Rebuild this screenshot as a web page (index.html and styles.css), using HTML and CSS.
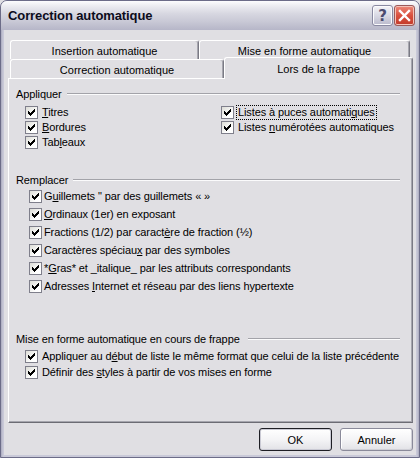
FILE: index.html
```html
<!DOCTYPE html>
<html lang="fr">
<head>
<meta charset="utf-8">
<title>Correction automatique</title>
<link rel="stylesheet" href="styles.css">
</head>
<body>
<div class="window">
  <div class="titlebar">
    <span class="title">Correction automatique</span>
    <div class="tb-buttons">
      <span class="tb-btn help">?</span>
      <span class="tb-btn close"><svg width="21" height="21" viewBox="0 0 21 21"><path d="M6 6L15 15M15 6L6 15" stroke="#fff" stroke-width="2.4" stroke-linecap="square" fill="none"/></svg></span>
    </div>
  </div>
  <div class="client">
    <div class="tabs">
      <div class="tabrow row1">
        <div class="tab t-ins">Insertion automatique</div>
        <div class="tab t-mise">Mise en forme automatique</div>
      </div>
      <div class="tabrow row2">
        <div class="tab t-corr">Correction automatique</div>
        <div class="tab t-lors selected">Lors de la frappe</div>
      </div>
    </div>
    <div class="panel">
      <section class="group g-apply">
        <div class="group-head"><span>Appliquer</span><i class="rule"></i></div>
        <div class="cols">
          <div class="col">
            <div class="row"><span class="cb"></span><span><u>T</u>itres</span></div>
            <div class="row"><span class="cb"></span><span><u>B</u>ordures</span></div>
            <div class="row"><span class="cb"></span><span>Tab<u>l</u>eaux</span></div>
          </div>
          <div class="col">
            <div class="row"><span class="cb"></span><span class="focus">Listes à puces automati<u>q</u>ues</span></div>
            <div class="row"><span class="cb"></span><span>Listes <u>n</u>umérotées automatiques</span></div>
          </div>
        </div>
      </section>
      <section class="group g-replace">
        <div class="group-head"><span>Remplacer</span><i class="rule"></i></div>
        <div class="col">
          <div class="row"><span class="cb"></span><span>G<u>u</u>illemets " par des guillemets « »</span></div>
          <div class="row"><span class="cb"></span><span><u>O</u>rdinaux (1er) en exposant</span></div>
          <div class="row"><span class="cb"></span><span>Fractions (1/2) par caract<u>è</u>re de fraction (½)</span></div>
          <div class="row"><span class="cb"></span><span>Caractères spéciau<u>x</u> par des symboles</span></div>
          <div class="row"><span class="cb"></span><span>*<u>G</u>ras* et _italique_ par les attributs correspondants</span></div>
          <div class="row"><span class="cb"></span><span>Adresses <u>I</u>nternet et réseau par des liens hypertexte</span></div>
        </div>
      </section>
      <section class="group g-format">
        <div class="group-head"><span>Mise en forme automatique en cours de frappe</span><i class="rule wide"></i></div>
        <div class="col">
          <div class="row"><span class="cb"></span><span>Appliquer au d<u>é</u>but de liste le même format que celui de la liste précédente</span></div>
          <div class="row"><span class="cb"></span><span>Définir des <u>s</u>tyles à partir de vos mises en forme</span></div>
        </div>
      </section>
    </div>
    <div class="actions">
      <button class="btn default">OK</button>
      <button class="btn">Annuler</button>
    </div>
  </div>
</div>
</body>
</html>
```
FILE: styles.css
```css
html, body {
  margin: 0;
  padding: 0;
  background: #e0dfe3;
}
body {
  font: 11px "Liberation Sans", Arial, sans-serif;
  color: #000;
}
.window {
  box-sizing: border-box;
  width: 420px;
  height: 458px;
  display: flex;
  flex-direction: column;
  background: linear-gradient(90deg, #a9a9bd, #c9c9d8 2px, #c9c9d8 calc(100% - 2px), #a9a9bd);
  border: 1px solid #6c6c88;
  border-radius: 7px 7px 0 0;
  overflow: hidden;
}
.titlebar {
  flex: none;
  height: 29px;
  display: flex;
  align-items: center;
  justify-content: space-between;
  padding: 0 4px 0 7px;
  background: linear-gradient(#fdfdfe, #ebebf0 18%, #d6d6e0 45%, #c9c9d6 70%, #b6b6c8);
}
.title {
  font: bold 13px "Liberation Sans", Arial, sans-serif;
  color: #0c0c1c;
  letter-spacing: -0.1px;
}
.tb-buttons {
  display: flex;
  gap: 1px;
}
.tb-btn {
  box-sizing: border-box;
  width: 21px;
  height: 21px;
  border-radius: 3px;
  display: flex;
  align-items: center;
  justify-content: center;
}
.help {
  border: 1px solid #8a8aa2;
  box-shadow: inset 0 0 0 1px #fbfbfd;
  background: linear-gradient(#f4f4f8, #d6d6e2 55%, #babacc);
  font: bold 15px "DejaVu Sans", sans-serif;
  color: #4c4c70;
}
.close {
  border: 1px solid #9a5a5a;
  box-shadow: inset 0 0 0 1px #f3c2b8;
  background: linear-gradient(#ec8a7a, #d9503f 50%, #c23a2a);
}
.close svg {
  display: block;
  margin: -1px;
}
.client {
  flex: 1;
  margin: 0 3px 2px;
  background: #e0dfe3;
  padding-top: 10px;
  display: flex;
  flex-direction: column;
}
.tabs {
  margin-left: 6px;
}
.tabrow {
  display: flex;
  height: 19px;
}
.row2 {
  margin-top: -2px;
  height: 21px;
  align-items: flex-end;
}
.tab {
  box-sizing: border-box;
  height: 19px;
  display: flex;
  align-items: center;
  justify-content: center;
  border: 1px solid;
  border-color: #fff #7a7a84 transparent #fff;
  border-bottom: none;
  border-radius: 3px 3px 0 0;
  box-shadow: inset -1px 0 #a6a6ae;
  background: #e0dfe3;
}
.row1 .tab { padding-top: 2px; }
.row2 .tab { padding-top: 1px; }
.t-ins { width: 189px; }
.t-mise { width: 211px; }
.t-corr { width: 214px; }
.t-lors {
  width: 189px;
  height: 22px;
  margin-bottom: -1px;
  position: relative;
  z-index: 1;
}
.panel {
  box-sizing: border-box;
  margin-left: 4px;
  width: 405px;
  height: 345px;
  border-top: 1px solid #fff;
  border-left: 1px solid #fff;
  border-right: 1px solid #7a7a84;
  border-bottom: 1px solid #6c6c74;
  box-shadow: inset -1px -1px #a6a6ae;
  padding: 8px 12px 0 7px;
  letter-spacing: -0.1px;
}
.group-head {
  display: flex;
  align-items: center;
  height: 14px;
  line-height: 14px;
}
.rule {
  flex: 1;
  margin-left: 5px;
  border-top: 1px solid #a3a3a9;
  border-bottom: 1px solid #fbfbfc;
}
.rule.wide { margin-left: 8px; }
.cols {
  display: grid;
  grid-template-columns: 205px 1fr;
}
.row {
  display: flex;
  align-items: center;
  white-space: nowrap;
  line-height: 13px;
}
.cb {
  box-sizing: border-box;
  width: 13px;
  height: 13px;
  flex: none;
  border: 1px solid #7f7f8b;
  background-color: #fff;
  background-image: url("data:image/svg+xml,%3Csvg xmlns='http://www.w3.org/2000/svg' width='11' height='11' shape-rendering='crispEdges'%3E%3Cpath d='M8 2h1v1h-1z M7 3h2v1h-2z M2 4h1v1h-1z M6 4h3v1h-3z M2 5h2v1h-2z M5 5h3v1h-3z M2 6h5v1h-5z M3 7h3v1h-3z M4 8h1v1h-1z' fill='%23000'/%3E%3C/svg%3E"), linear-gradient(135deg, #dcdcd6, #fff 70%);
  background-repeat: no-repeat;
}
.g-apply .cols { margin-top: 4px; }
.g-apply .row { height: 15px; }
.g-apply .col:first-child { padding-left: 9px; }
.g-apply .cb, .g-format .cb { margin-right: 4px; }
.focus {
  outline: 1px dotted #000;
  padding: 0 1px;
  margin-left: -1px;
}
.g-replace { margin-top: 23px; }
.g-replace .col { padding-left: 13px; }
.g-replace .row { height: 18px; }
.g-replace .cb { margin-right: 2px; }
.g-format { margin-top: 37px; }
.g-format .col { margin-top: 2px; padding-left: 9px; }
.g-format .row { height: 16px; }
u { text-decoration-thickness: 1px; text-underline-offset: 1px; }
.actions {
  display: flex;
  justify-content: flex-end;
  gap: 8px;
  margin-top: 5px;
  padding-right: 3px;
}
.btn {
  box-sizing: border-box;
  width: 73px;
  height: 23px;
  margin: 0;
  padding: 0;
  font: 11px "Liberation Sans", Arial, sans-serif;
  color: #000;
  border: 1px solid #8a8a9a;
  border-radius: 3px;
  background: linear-gradient(#ffffff, #f4f4f6 50%, #e2e2e6);
  box-shadow: inset -1px -1px #cfcfd6, inset 1px 1px #fff;
}
.btn.default {
  border-color: #1e1e24;
  box-shadow: inset 0 0 0 1px #cacad4;
}
```
